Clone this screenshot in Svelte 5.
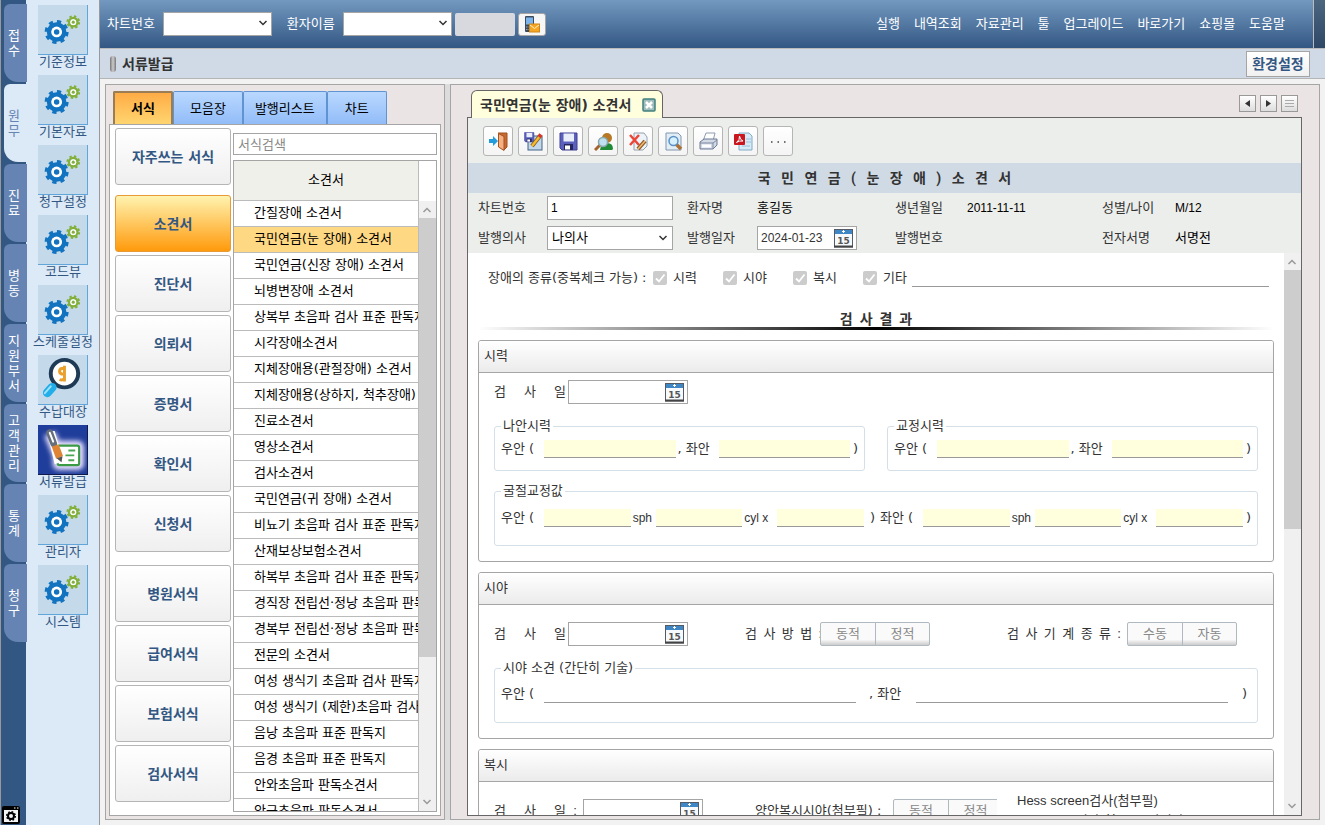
<script lang="ts">
	const modules = ['접수', '원무', '진료', '병동', '지원부서', '고객관리', '통계', '청구'];
	const shortcuts = [
		{ label: '기준정보', icon: 'gear' },
		{ label: '기본자료', icon: 'gear' },
		{ label: '청구설정', icon: 'gear' },
		{ label: '코드뷰', icon: 'gear' },
		{ label: '스케줄설정', icon: 'gear' },
		{ label: '수납대장', icon: 'money' },
		{ label: '서류발급', icon: 'paper' },
		{ label: '관리자', icon: 'gear' },
		{ label: '시스템', icon: 'gear' }
	];
	const menus = ['실행', '내역조회', '자료관리', '툴', '업그레이드', '바로가기', '쇼핑몰', '도움말'];
	const listTabs = ['서식', '모음장', '발행리스트', '차트'];
	const categoryGroups = [
		['자주쓰는 서식'],
		['소견서', '진단서', '의뢰서', '증명서', '확인서', '신청서'],
		['병원서식', '급여서식', '보험서식', '검사서식']
	];
	const forms = [
		'간질장애 소견서',
		'국민연금(눈 장애) 소견서',
		'국민연금(신장 장애) 소견서',
		'뇌병변장애 소견서',
		'상복부 초음파 검사 표준 판독지',
		'시각장애소견서',
		'지체장애용(관절장애) 소견서',
		'지체장애용(상하지, 척추장애) 소견서',
		'진료소견서',
		'영상소견서',
		'검사소견서',
		'국민연금(귀 장애) 소견서',
		'비뇨기 초음파 검사 표준 판독지',
		'산재보상보험소견서',
		'하복부 초음파 검사 표준 판독지',
		'경직장 전립선·정낭 초음파 판독지',
		'경복부 전립선·정낭 초음파 판독지',
		'전문의 소견서',
		'여성 생식기 초음파 검사 판독지',
		'여성 생식기 (제한)초음파 검사 판독지',
		'음낭 초음파 표준 판독지',
		'음경 초음파 표준 판독지',
		'안와초음파 판독소견서',
		'안구초음파 판독소견서'
	];
	const tools = [
		{ id: 'exit', label: '닫기' },
		{ id: 'edit', label: '수정 저장' },
		{ id: 'save', label: '저장' },
		{ id: 'user', label: '환자 조회' },
		{ id: 'delete', label: '삭제' },
		{ id: 'preview', label: '미리보기' },
		{ id: 'print', label: '인쇄' },
		{ id: 'pdf', label: 'PDF' }
	];

	let activeModule = $state('원무');
	let activeShortcut = $state('서류발급');
	let activeTab = $state('서식');
	let activeCategory = $state('소견서');
	let activeForm = $state('국민연금(눈 장애) 소견서');
</script>

{#snippet gearIcon()}
	<svg viewBox="0 0 50 50" class="fill">
		<g stroke="#1273c0" fill="none">
			<circle cx="19" cy="27.500" r="7.500" stroke-width="5" />
			<circle cx="19" cy="27.500" r="10.500" stroke-width="3.500" stroke-dasharray="4.200 4.050" />
		</g>
		<circle cx="19" cy="27.500" r="5.500" fill="#fff" />
		<circle cx="19" cy="27.500" r="2.800" fill="#1273c0" />
		<g stroke="#83b03a" fill="none">
			<circle cx="36" cy="17.500" r="4.300" stroke-width="2.500" />
			<circle cx="36" cy="17.500" r="6" stroke-width="2" stroke-dasharray="2.400 2.310" />
		</g>
		<circle cx="36" cy="17.500" r="3" fill="#fff" />
		<circle cx="36" cy="17.500" r="1.600" fill="#83b03a" />
	</svg>
{/snippet}

{#snippet moneyIcon()}
	<svg viewBox="0 0 50 50" class="fill">
		<circle cx="27" cy="19" r="14" fill="#fff" stroke="#1f3a55" stroke-width="4" />
		<path d="M14.500 33 L9.500 38.500" stroke="#22aee8" stroke-width="9" stroke-linecap="round" />
		<path d="M13 32 L7 39" stroke="#9ee2ff" stroke-width="2" stroke-linecap="round" />
		<path d="M27 11 v16 M26 13.500 q-4 0 -4 3 q0 3 4 3 M22 25 q3 1.500 5 -1" fill="none" stroke="#eaa02c" stroke-width="3" />
	</svg>
{/snippet}

{#snippet paperIcon()}
	<svg viewBox="0 0 50 50" class="fill">
		<defs>
			<filter id="glow" x="-30%" y="-30%" width="160%" height="160%">
				<feGaussianBlur stdDeviation="2.500" />
			</filter>
		</defs>
		<g filter="url(#glow)" fill="none" stroke="#e8e0ff" stroke-width="12" stroke-linejoin="round">
			<path d="M12 9 L23 36 M21 22 H41 V40 H21 Z" />
		</g>
		<rect x="20" y="21" width="22" height="20" rx="2" fill="#fff" stroke="#3b9a45" stroke-width="2.200" />
		<path d="M31 26 h7 M28 31 h9 M31 36 h6" stroke="#4ca553" stroke-width="2" />
		<path d="M9 6 L17 40 L26 37 L17 6 Z" fill="#fff" />
		<path d="M12 8 L16 19" stroke="#66707c" stroke-width="7" stroke-linecap="round" />
		<path d="M12 8 L15.500 17" stroke="#fff" stroke-width="2" stroke-linecap="round" />
		<path d="M17.500 21 L22 33" stroke="#de8434" stroke-width="7.500" />
		<path d="M19 34 L25 32 L24 38 Z" fill="#555" />
	</svg>
{/snippet}

{#snippet chevron(cls: string)}
	<svg class={cls} viewBox="0 0 10 10"><path d="M1.500 3 L5 6.500 L8.500 3" fill="none" stroke="currentColor" stroke-width="1.500" /></svg>
{/snippet}

{#snippet dateBox(label: string, value: string)}
	<span class="date-box">
		<input type="text" aria-label={label} {value} />
		<button type="button" class="calendar" aria-label="{label} 달력">
			<svg viewBox="0 0 19 19" class="fill">
				<rect x=".5" y=".5" width="18" height="17.500" fill="#f7fafc" stroke="#555b66" />
				<rect x="1" y="1" width="17" height="4" fill="#3f86c4" />
				<path d="M8 2.500 h3 M9.500 1 v3" stroke="#fff" />
				<path d="M0 17.500 h19" stroke="#444" stroke-width="2" />
				<text x="9.500" y="15" text-anchor="middle" font-family="DejaVu Sans" font-weight="bold" font-size="9" fill="#555">15</text>
			</svg>
		</button>
	</span>
{/snippet}

{#snippet floppy()}
	<path d="M1 1 h17 v17 h-15 l-2 -2 Z" fill="#5b60bd" stroke="#3c4096" />
	<rect x="4.500" y="1.500" width="10.500" height="8" fill="#e8eefa" />
	<rect x="5" y="12" width="9" height="6" fill="#24265c" />
	<rect x="6" y="13.500" width="5" height="4" fill="#fff" />
{/snippet}

{#snippet toolIcon(id: string)}
	<svg viewBox="0 0 19 19" class="tool-icon">
		{#if id === 'exit'}
			<path d="M9 1 H18 V15 L15 18" fill="#c76a32" stroke="#a2501d" />
			<path d="M9.500 1.500 L15 4.500 V18.500 L9.500 15 Z" fill="#f3b184" stroke="#a65120" />
			<path d="M0 7 h4 V4 l5 5 l-5 5 v-3 H0 Z" fill="#239cdd" />
		{:else if id === 'edit'}
			<rect x="4" y="4" width="14" height="14" fill="#c5d8ea" stroke="#426489" />
			<g transform="scale(.55)">{@render floppy()}</g>
			<path d="M8 14 L16 4" stroke="#7a5523" stroke-width="4" />
			<path d="M8 14 L16 4" stroke="#f7bb2e" stroke-width="2.500" />
			<path d="M15 5 L17 2.500" stroke="#d83426" stroke-width="4" />
		{:else if id === 'save'}
			{@render floppy()}
		{:else if id === 'user'}
			<circle cx="13" cy="6" r="5" fill="#b77925" />
			<path d="M6 18 q1 -7 7 -7 q6 0 6 6 l-1 1 Z" fill="#1f8b35" />
			<path d="M6 13 L1 18" stroke="#a4632d" stroke-width="3" />
			<circle cx="9" cy="10" r="4.500" fill="#bfe1ef" stroke="#87a7ae" stroke-width="1.500" />
		{:else if id === 'delete'}
			<path d="M5 1 h10 l3 4 v9 l-4 4 h-9 Z" fill="#edf3f8" stroke="#92a2ae" />
			<path d="M1 3 L10 13 M10 3 L1 13" stroke="#ec4638" stroke-width="2.500" />
			<path d="M9 17 L16 9" stroke="#955728" stroke-width="4" />
			<path d="M9 17 L16 9" stroke="#eac26e" stroke-width="1.500" />
		{:else if id === 'preview'}
			<path d="M2 1 h12 l3 3 v14 H2 Z" fill="#e2edf5" stroke="#8197b0" />
			<path d="M12 12 L17 17" stroke="#ac7136" stroke-width="3.500" />
			<circle cx="9.500" cy="9" r="4.500" fill="#d5f0ff" stroke="#5b91c4" stroke-width="1.500" />
		{:else if id === 'print'}
			<path d="M7 1 L16 1 L14 9 L4 9 Z" fill="#fff" stroke="#8e9bb0" />
			<path d="M1 10 L5 7 H18 V13 L14 17 H1 Z" fill="#d3dae6" stroke="#6b7894" />
			<path d="M3 14 H12" stroke="#fff" stroke-width="3" />
			<path d="M1 11 H14 L18 8 M14 11 V17" fill="none" stroke="#7c89a2" />
		{:else}
			<path d="M5 1 h10 l3 3 v14 H5 Z" fill="#d7ebf7" stroke="#82abc5" />
			<path d="M8 14 h8 M12 7 h5 M12 10 h5" stroke="#9cc0d8" />
			<rect x="0" y="2" width="11" height="11" rx="1" fill="#ca161f" />
			<path d="M2.500 10.500 Q6 8 5.500 4 Q6 8 9 9 Q5 8.500 2.500 10.500" fill="none" stroke="#fff" />
		{/if}
	</svg>
{/snippet}

{#snippet seg(name: string, options: string[])}
	<span class="segment" role="group" aria-label={name}>
		{#each options as option}
			<button type="button">{option}</button>
		{/each}
	</span>
{/snippet}

<div class="app">
	<nav class="rail" aria-label="업무">
		{#each modules as name}
			<button type="button" class="rail-tab" class:active={activeModule === name} onclick={() => (activeModule = name)}>
				<span>{name}</span>
			</button>
		{/each}
		<button type="button" class="rail-settings" aria-label="화면 설정">
			<svg viewBox="0 0 18 18" class="fill">
				<rect width="18" height="18" rx="2" fill="#000" />
				<rect x="2" y="4" width="14" height="12" fill="#f4f4f4" />
				<circle cx="9" cy="10" r="3" fill="none" stroke="#000" stroke-width="2" />
				<circle cx="9" cy="10" r="4.300" fill="none" stroke="#000" stroke-width="1.500" stroke-dasharray="1.700 1.670" />
				<path d="M12 2 h1.500 M15 2 h1.500" stroke="#fff" />
			</svg>
		</button>
	</nav>

	<nav class="shortcuts" aria-label="바로가기">
		{#each shortcuts as item}
			<button type="button" class="shortcut" class:active={activeShortcut === item.label} onclick={() => (activeShortcut = item.label)}>
				<span class="shortcut-icon">
					{#if item.icon === 'gear'}
						{@render gearIcon()}
					{:else if item.icon === 'money'}
						{@render moneyIcon()}
					{:else}
						{@render paperIcon()}
					{/if}
				</span>
				<span class="shortcut-label">{item.label}</span>
			</button>
		{/each}
	</nav>

	<div class="main">
		<header class="topbar">
			<label for="chart-search">차트번호</label>
			<span class="select-box top-select">
				<select id="chart-search"><option></option></select>
				{@render chevron('chevron')}
			</span>
			<label for="name-search" class="name-label">환자이름</label>
			<span class="select-box top-select">
				<select id="name-search"><option></option></select>
				{@render chevron('chevron')}
			</span>
			<span class="blank-chip"></span>
			<button type="button" class="sms" aria-label="문자 발송">
				<svg viewBox="0 0 16 17" class="sms-icon">
					<rect x="1" y="0" width="9" height="16" rx="1" fill="#3c4a5c" />
					<rect x="2" y="1.500" width="7" height="7" fill="#7db4ec" />
					<path d="M2 11 h7 M2 13.500 h7" stroke="#98a8ba" stroke-dasharray="1.500 1" />
					<rect x="5.500" y="8" width="10" height="8" fill="#f5a623" stroke="#cf8618" />
					<path d="M6 9 L10.500 12.500 L15 9" fill="none" stroke="#fff0c8" />
				</svg>
			</button>
			<nav class="menu" aria-label="메뉴">
				{#each menus as menu}
					<a href="#menu">{menu}</a>
				{/each}
			</nav>
			<span class="topbar-end"></span>
		</header>

		<div class="titlebar">
			<span class="pill"></span>
			<h1>서류발급</h1>
			<button type="button">환경설정</button>
		</div>

		<div class="panels">
			<section class="list-panel">
				<div class="list-tabs" role="tablist">
					{#each listTabs as tab}
						<button type="button" role="tab" aria-selected={activeTab === tab} class:active={activeTab === tab} onclick={() => (activeTab = tab)}>{tab}</button>
					{/each}
				</div>
				<div class="list-body">
					<div class="categories">
						{#each categoryGroups as group}
							<div class="category-group">
								{#each group as category}
									<button type="button" class:active={activeCategory === category} onclick={() => (activeCategory = category)}>{category}</button>
								{/each}
							</div>
						{/each}
					</div>
					<div class="form-list">
						<input type="search" placeholder="서식검색" aria-label="서식검색" />
						<div class="grid">
							<div class="grid-rows">
								<table>
									<thead>
										<tr><th>소견서</th></tr>
									</thead>
									<tbody>
										{#each forms as form}
											<tr class:selected={activeForm === form} onclick={() => (activeForm = form)}><td>{form}</td></tr>
										{/each}
									</tbody>
								</table>
							</div>
							<div class="scroll grid-scroll">
								{@render chevron('arrow up')}
								<span class="thumb grid-thumb"></span>
								{@render chevron('arrow')}
							</div>
						</div>
					</div>
				</div>
			</section>

			<div class="splitter"></div>

			<section class="doc-panel">
				<div class="doc-tabs">
					<div class="doc-tab">
						<span>국민연금(눈 장애) 소견서</span>
						<button type="button" aria-label="탭 닫기">
							<svg viewBox="0 0 14 14" class="fill"><rect x="1" y="1" width="12" height="12" rx="1" fill="#9fbdbc" stroke="#41807e" stroke-width="1.500" /><path d="M4 4 l6 6 M10 4 l-6 6" stroke="#fff" stroke-width="2.500" /></svg>
						</button>
					</div>
					<div class="tab-nav">
						<button type="button" aria-label="이전"><svg viewBox="0 0 13 13"><path d="M9 3 v7 L4 6.500 Z" fill="#333" /></svg></button>
						<button type="button" aria-label="다음"><svg viewBox="0 0 13 13"><path d="M4 3 v7 L9 6.500 Z" fill="#333" /></svg></button>
						<button type="button" aria-label="목록"><svg viewBox="0 0 13 13"><path d="M2 3.500 h9 M2 6.500 h9 M2 9.500 h9" stroke="#aaa" /></svg></button>
					</div>
				</div>

				<div class="doc">
					<div class="toolbar">
						{#each tools as tool}
							<button type="button" aria-label={tool.label}>{@render toolIcon(tool.id)}</button>
						{/each}
						<button type="button" aria-label="더보기">
							<svg viewBox="0 0 19 19" class="tool-icon"><path d="M2 10 h1.500 M8.500 10 h1.500 M15 10 h1.500" stroke="#444" stroke-width="1.500" /></svg>
						</button>
					</div>

					<h2 class="spaced">국   민   연   금   (   눈   장   애   )   소   견   서</h2>

					<div class="info">
						<label for="chart-no">차트번호</label>
						<input id="chart-no" class="latin" type="text" value="1" />
						<span>환자명</span>
						<span class="value">홍길동</span>
						<span>생년월일</span>
						<span class="value latin">2011-11-11</span>
						<span>성별/나이</span>
						<span class="value latin">M/12</span>

						<label for="doctor">발행의사</label>
						<span class="select-box doctor">
							<select id="doctor"><option>나의사</option></select>
							{@render chevron('chevron')}
						</span>
						<span>발행일자</span>
						<span class="issue-date">{@render dateBox('발행일자', '2024-01-23')}</span>
						<span>발행번호</span>
						<span class="value"></span>
						<span>전자서명</span>
						<span class="value">서명전</span>
					</div>

					<div class="doc-body">
						<div class="sheet">
							<div class="kinds">
								<span class="kinds-label">장애의 종류(중복체크 가능) :</span>
								{#each ['시력', '시야', '복시', '기타'] as kind}
									<label>
										<input type="checkbox" checked disabled />
										<svg viewBox="0 0 14 14" class="tick"><path d="M3 7.500 L6 10.500 L11.500 3.500" fill="none" stroke="#fff" stroke-width="1.800" /></svg>
										<span>{kind}</span>
									</label>
								{/each}
								<input type="text" class="line etc" aria-label="기타 내용" />
							</div>

							<h3 class="spaced">검  사  결  과</h3>

							<section class="card">
								<h4>시력</h4>
								<div class="card-body">
									<div class="row">
										<span class="exam-label">검     사     일</span>
										{@render dateBox('시력 검사일', '')}
									</div>
									<div class="pair">
										{#each ['나안시력', '교정시력'] as title}
											<fieldset>
												<legend>{title}</legend>
												<div class="field-row">
													<span class="lead">우안 (</span>
													<input type="text" class="line yellow" aria-label="{title} 우안" />
													<span class="mid">, 좌안</span>
													<input type="text" class="line yellow" aria-label="{title} 좌안" />
													<span class="close">)</span>
												</div>
											</fieldset>
										{/each}
									</div>
									<fieldset class="refraction">
										<legend>굴절교정값</legend>
										<div class="field-row">
											{#each ['우안', '좌안'] as eye}
												<span class="lead">{eye} (</span>
												<input type="text" class="line yellow" aria-label="{eye} 구면" />
												<span class="latin sph">sph</span>
												<input type="text" class="line yellow" aria-label="{eye} 원주" />
												<span class="latin cyl">cyl x</span>
												<input type="text" class="line yellow" aria-label="{eye} 축" />
												<span class="end">)</span>
											{/each}
										</div>
									</fieldset>
								</div>
							</section>

							<section class="card">
								<h4>시야</h4>
								<div class="card-body roomy">
									<div class="row">
										<span class="exam-label">검     사     일</span>
										{@render dateBox('시야 검사일', '')}
										<span class="spaced method">검  사  방  법  :</span>
										{@render seg('검사방법', ['동적', '정적'])}
										<span class="spaced machine">검  사  기  계  종  류  :</span>
										{@render seg('검사기계종류', ['수동', '자동'])}
									</div>
									<fieldset class="opinion">
										<legend>시야 소견 (간단히 기술)</legend>
										<div class="field-row">
											<span class="lead">우안 (</span>
											<input type="text" class="line" aria-label="시야 우안" />
											<span class="wide-mid">, 좌안</span>
											<input type="text" class="line" aria-label="시야 좌안" />
											<span class="wide-close">)</span>
										</div>
									</fieldset>
								</div>
							</section>

							<section class="card">
								<h4>복시</h4>
								<div class="card-body roomy">
									<div class="row">
										<span class="exam-label colon">검     사     일  :</span>
										{@render dateBox('복시 검사일', '')}
										<span class="binocular">양안복시시야(첨부필) :</span>
										<span class="cut">{@render seg('양안복시시야', ['동적', '정적'])}</span>
										<span class="hess">Hess screen검사(첨부필)<br /><span class="hess-sub">diplopia검사(첨부) 시야검사</span></span>
									</div>
								</div>
							</section>
						</div>
						<div class="scroll">
							{@render chevron('arrow up')}
							<span class="thumb doc-thumb"></span>
							{@render chevron('arrow')}
						</div>
					</div>
				</div>
			</section>
		</div>
	</div>
</div>

<style>
	:global(body) {
		background: #f2f2f2;
	}

	.app {
		display: flex;
		height: 100vh;
		overflow: hidden;
		font-family: 'DejaVu Sans', 'Noto Sans CJK KR', sans-serif;
		font-size: 13px;
		line-height: 18px;
		color: #333;
	}

	.app * {
		box-sizing: border-box;
	}

	button,
	input,
	select {
		font: inherit;
		color: inherit;
		margin: 0;
		padding: 0;
		border: 1px solid #a5a5a5;
		border-radius: 0;
		outline: none;
	}

	button {
		white-space: nowrap;
		cursor: pointer;
	}

	h1,
	h2,
	h3,
	h4 {
		margin: 0;
		font-size: 14px;
	}

	.fill {
		display: block;
		width: 100%;
		height: 100%;
	}

	.spaced {
		font-family: Roboto, 'Noto Sans CJK KR', sans-serif;
		white-space: pre;
	}

	/* 왼쪽 업무 탭 */
	.rail {
		flex: none;
		display: flex;
		flex-direction: column;
		gap: 2px;
		width: 27px;
		padding: 4px 0 1px 2px;
		background: linear-gradient(90deg, #999 1px, #335783 1px, #335783 26px, #dce9f6 26px);
	}

	.rail-tab {
		display: flex;
		align-items: center;
		justify-content: center;
		width: 23px;
		height: 78px;
		margin-left: 2px;
		padding-right: 3px;
		border: 0;
		border-radius: 6px 0 0 14px;
		background: #6584b3;
		color: #fff;
		line-height: 15px;
		white-space: normal;
	}

	.rail-tab span {
		width: 13px;
		word-break: break-all;
	}

	.rail-tab.active {
		background: #dce9f6;
		color: #6584b3;
	}

	.rail-settings {
		width: 18px;
		height: 18px;
		margin-top: auto;
		border: 0;
		background: none;
	}

	.shortcuts {
		flex: none;
		display: flex;
		flex-direction: column;
		width: 73px;
		padding-top: 5px;
		background: #dce9f6;
		border-right: 1px solid #999;
	}

	.shortcut {
		display: flex;
		flex-direction: column;
		align-items: center;
		height: 70px;
		border: 0;
		background: none;
		color: #335783;
	}

	.shortcut-icon {
		width: 50px;
		height: 50px;
		background: #c4d9ea;
		border-right: 1px solid #62a5d8;
		border-bottom: 1px solid #62a5d8;
	}

	.shortcut.active .shortcut-icon {
		background: #1f3d9a;
		border-color: #111a4c;
	}

	.shortcut-label {
		line-height: 14px;
	}

	.main {
		flex: 1;
		display: flex;
		flex-direction: column;
		min-width: 0;
	}

	.topbar {
		flex: none;
		display: flex;
		align-items: center;
		height: 49px;
		padding-left: 7px;
		background: linear-gradient(#7399c0, #335783);
		border-bottom: 1px solid #bbb;
		color: #fff;
	}

	.select-box {
		position: relative;
		display: flex;
		height: 24px;
		color: #333;
	}

	.select-box select {
		width: 100%;
		padding-left: 4px;
		background: #fff;
		appearance: none;
		color: #000;
	}

	.chevron {
		position: absolute;
		top: 6px;
		right: 4px;
		width: 10px;
		height: 10px;
	}

	.top-select {
		width: 109px;
		margin-left: 8px;
	}

	.name-label {
		margin-left: 15px;
	}

	.blank-chip {
		width: 60px;
		height: 23px;
		margin: 0 3px;
		background: #d8d9de;
		border-radius: 2px;
	}

	.sms {
		display: flex;
		align-items: center;
		justify-content: center;
		width: 28px;
		height: 23px;
		border-radius: 3px;
		background: #f6f6f6;
	}

	.sms-icon {
		width: 16px;
		height: 17px;
	}

	.menu {
		display: flex;
		gap: 14px;
		margin-left: auto;
		padding-right: 28px;
	}

	.menu a {
		color: #fff;
		text-decoration: none;
		white-space: nowrap;
	}

	.topbar-end {
		width: 12px;
		height: 100%;
		background: linear-gradient(#4c6680, #2d4766);
		border-left: 1px solid #bbb;
	}

	.titlebar {
		flex: none;
		display: flex;
		align-items: center;
		height: 30px;
		padding: 0 15px 0 10px;
		background: #d0dae6;
		border-bottom: 1px solid #b5b5b5;
	}

	.pill {
		width: 6px;
		height: 16px;
		margin-right: 6px;
		border-radius: 3px;
		background: linear-gradient(90deg, #777, #ccc, #777);
	}

	.titlebar h1 {
		line-height: 16px;
	}

	.titlebar button {
		width: 64px;
		height: 26px;
		margin-left: auto;
		background: linear-gradient(#fff, #f0f0f0);
		color: #335783;
		font-size: 14px;
		font-weight: bold;
	}

	.panels {
		flex: 1;
		display: flex;
		min-height: 0;
		padding: 5px;
	}

	.list-panel {
		display: flex;
		flex-direction: column;
		width: 340px;
		padding: 6px 3px 3px;
		background: #eae5e4;
		border: 1px solid #a5a5a5;
	}

	.splitter {
		width: 5px;
		background: #dcdcdc;
	}

	.list-tabs {
		display: flex;
		padding-left: 4px;
		height: 33px;
	}

	.list-tabs button {
		min-width: 60px;
		padding: 2px 11px 0;
		border-color: #5f93d2;
		border-bottom: 0;
		border-radius: 2px 2px 0 0;
		background: linear-gradient(#b9d8ff, #92bcf8);
		color: #000;
	}

	.list-tabs button:nth-child(2) {
		padding: 2px 16px 0;
	}

	.list-tabs .active {
		padding: 0 16px;
		border: 2px solid #9a7d55;
		border-bottom: 0;
		background: linear-gradient(#ffac45, #ffd570);
		font-weight: bold;
	}

	.list-body {
		flex: 1;
		display: flex;
		gap: 2px;
		min-height: 0;
		padding: 3px 3px 3px 5px;
		background: #fff;
		border: 1px solid #a5a5a5;
	}

	.categories {
		display: flex;
		flex-direction: column;
		gap: 10px;
		width: 116px;
		flex: none;
	}

	.category-group {
		display: flex;
		flex-direction: column;
		gap: 3px;
	}

	.category-group:last-child {
		margin-top: 3px;
	}

	.category-group button {
		height: 57px;
		border-color: #b5b5b5;
		border-radius: 3px;
		background: linear-gradient(#fff, #efefef);
		color: #335783;
		font-size: 14px;
		font-weight: bold;
	}

	.category-group .active {
		border-color: #e69b37;
		background: linear-gradient(#fff3b0, #ff9a0c);
	}

	.form-list {
		flex: 1;
		display: flex;
		flex-direction: column;
		gap: 5px;
		min-width: 0;
		padding-top: 5px;
	}

	.form-list input {
		flex: none;
		width: 100%;
		height: 22px;
		padding-left: 4px;
		background: #fff;
	}

	.form-list input::placeholder {
		color: #888;
	}

	.grid {
		flex: 1;
		display: flex;
		min-height: 0;
		border: 1px solid #a5a5a5;
	}

	.grid-rows {
		flex: 1;
		min-width: 0;
		overflow: hidden;
		border-right: 1px solid #bbb;
	}

	table {
		width: 100%;
		table-layout: fixed;
		border-collapse: collapse;
	}

	th {
		height: 39px;
		padding: 0;
		background: #f0f0ea;
		border-bottom: 1px solid #bbb;
		color: #000;
		font-weight: normal;
	}

	td {
		height: 26px;
		padding: 0 0 0 20px;
		border-bottom: 1px solid #bbb;
		color: #000;
		overflow: hidden;
		white-space: nowrap;
	}

	.selected td {
		background: #ffd884;
	}

	.scroll {
		flex: none;
		display: flex;
		flex-direction: column;
		width: 17px;
		background: #f0f0f0;
		color: #999;
	}

	.grid-scroll {
		margin-top: 40px;
	}

	.arrow {
		flex: none;
		width: 10px;
		height: 10px;
		margin: auto 3px 4px;
	}

	.arrow.up {
		margin: 4px 3px 3px;
		transform: rotate(180deg);
	}

	.thumb {
		background: #cdcdcd;
	}

	.grid-thumb {
		height: 72%;
	}

	.doc-thumb {
		height: 46%;
	}

	.doc-panel {
		flex: 1;
		display: flex;
		flex-direction: column;
		min-width: 0;
		padding: 5px 17px 3px 16px;
		background: #eae5e4;
		border: 1px solid #a5a5a5;
	}

	.doc-tabs {
		display: flex;
		justify-content: space-between;
		height: 27px;
		padding: 0 4px;
	}

	.doc-tab {
		position: relative;
		z-index: 1;
		display: flex;
		align-items: center;
		justify-content: space-between;
		gap: 6px;
		min-width: 192px;
		height: 28px;
		padding: 0 6px 0 8px;
		background: #ffffde;
		border: 1px solid #666;
		border-bottom: 0;
		border-radius: 6px 6px 0 0;
		font-size: 14px;
		font-weight: bold;
		white-space: nowrap;
	}

	.doc-tab button {
		width: 14px;
		height: 14px;
		border: 0;
		background: none;
	}

	.tab-nav {
		display: flex;
		gap: 4px;
		padding-top: 5px;
	}

	.tab-nav button {
		width: 17px;
		height: 17px;
		background: linear-gradient(#fff, #ddd);
		border-color: #999;
	}

	.tab-nav svg {
		display: block;
		width: 13px;
		height: 13px;
		margin: 1px;
	}

	.doc {
		flex: 1;
		display: flex;
		flex-direction: column;
		min-height: 0;
		background: #fff;
		border: 1px solid #666;
	}

	.toolbar {
		flex: none;
		display: flex;
		gap: 5px;
		padding: 8px 15px 7px;
		background: #eceeeb;
	}

	.toolbar button {
		display: flex;
		align-items: center;
		justify-content: center;
		width: 30px;
		height: 30px;
		border-color: #b5b5b5;
		border-radius: 3px;
		background: linear-gradient(#fff, #f4f4f4);
	}

	.tool-icon {
		width: 19px;
		height: 19px;
	}

	h2 {
		flex: none;
		height: 30px;
		background: #d0dae4;
		line-height: 30px;
		text-align: center;
	}

	.info {
		flex: none;
		display: grid;
		grid-template-columns: 69px 140fr 70px 138fr 72px 135fr 73px 126fr;
		grid-auto-rows: 30px;
		align-items: center;
		padding-left: 10px;
		background: #eceeeb;
		white-space: nowrap;
	}

	.info > input,
	.doctor {
		width: 90%;
		height: 24px;
	}

	.info > input {
		padding-left: 3px;
		background: #fff;
		color: #000;
	}

	.value {
		color: #000;
	}

	.latin {
		font-family: 'Liberation Sans', 'Noto Sans CJK KR', sans-serif;
		font-size: 12px;
	}

	.doctor .chevron {
		top: 7px;
		right: 5px;
	}

	.date-box {
		display: flex;
		align-items: center;
		width: 120px;
		height: 24px;
		background: #fff;
		border: 1px solid #a5a5a5;
	}

	.date-box input {
		flex: 1;
		min-width: 0;
		height: 22px;
		padding-left: 3px;
		border: 0;
		background: none;
		font-family: 'Liberation Sans', sans-serif;
		font-size: 12px;
	}

	.calendar {
		width: 19px;
		height: 19px;
		margin-right: 3px;
		border: 0;
		background: none;
	}

	.issue-date .date-box {
		width: 100px;
	}

	.doc-body {
		flex: 1;
		display: flex;
		min-height: 0;
	}

	.sheet {
		flex: 1;
		min-width: 0;
		padding: 0 10px;
		overflow: hidden;
	}

	.kinds {
		display: flex;
		align-items: center;
		gap: 30px;
		height: 36px;
		margin-top: 7px;
		padding: 0 5px 0 10px;
		white-space: nowrap;
	}

	.kinds-label {
		width: 165px;
		margin-right: -30px;
	}

	.kinds label {
		position: relative;
		display: flex;
		flex: none;
		align-items: center;
		gap: 6px;
		width: 40px;
	}

	.kinds label input {
		flex: none;
		width: 14px;
		height: 14px;
		border: 0;
		border-radius: 2px;
		background: #ccc;
		appearance: none;
	}

	.tick {
		position: absolute;
		left: 0;
		width: 14px;
		height: 14px;
	}

	.line {
		flex: 1;
		min-width: 0;
		height: 18px;
		border: 0;
		border-bottom: 1px solid #999;
		background: none;
	}

	.line.yellow {
		background: #ffffde;
	}

	.etc {
		margin-left: -21px;
	}

	h3 {
		height: 34px;
		padding-top: 14px;
		background: linear-gradient(90deg, transparent, #000 50%, transparent) bottom / 100% 3px no-repeat;
		text-align: center;
		line-height: 18px;
	}

	.card {
		margin-top: 10px;
		border: 1px solid #a5a5a5;
		border-radius: 3px;
	}

	h4 {
		height: 32px;
		padding-left: 5px;
		border-bottom: 1px solid #a5a5a5;
		border-radius: 2px 2px 0 0;
		background: linear-gradient(#fff, #ebebeb);
		font-size: 13px;
		font-weight: normal;
		line-height: 30px;
	}

	.card-body {
		padding: 7px 15px 15px;
	}

	.card-body.roomy {
		padding-top: 17px;
	}

	.row {
		display: flex;
		align-items: center;
		height: 24px;
		white-space: nowrap;
	}

	.exam-label {
		width: 74px;
		font-family: 'Liberation Sans', 'Noto Sans CJK KR', sans-serif;
		white-space: pre;
	}

	.exam-label.colon {
		width: 89px;
	}

	.method {
		width: 75px;
		margin-left: 57px;
	}

	.machine {
		width: 120px;
		margin-left: 77px;
	}

	.binocular {
		width: 138px;
		margin-left: 52px;
	}

	.cut {
		width: 104px;
		overflow: hidden;
	}

	.hess {
		margin-left: 20px;
		font-family: 'Liberation Sans', 'Noto Sans CJK KR', sans-serif;
		line-height: 20px;
	}

	.hess-sub {
		padding-left: 14px;
	}

	.segment {
		display: flex;
	}

	.segment button {
		flex: none;
		width: 55px;
		height: 24px;
		border-color: #b0b8c0;
		border-radius: 0 2px 2px 0;
		background: linear-gradient(#fafafa 75%, #ccc);
		color: #888;
	}

	.segment button:first-child {
		width: 56px;
		margin-right: -1px;
		border-radius: 2px 0 0 2px;
	}

	fieldset {
		min-width: 0;
		margin: 0;
		padding: 2px 6px 9px;
		border: 1px solid #d5dfe8;
		border-radius: 3px;
	}

	legend {
		padding: 0 2px;
		line-height: 18px;
	}

	.pair {
		display: grid;
		grid-template-columns: 1fr 1fr;
		gap: 22px;
		margin: 13px 0 11px;
	}

	.field-row {
		display: flex;
		align-items: center;
		height: 24px;
		white-space: nowrap;
	}

	.refraction {
		padding: 6px 6px 15px;
	}

	.opinion {
		margin-top: 13px;
		padding: 5px 6px 16px;
	}

	.lead {
		width: 43px;
	}

	.mid {
		width: 43px;
		padding-left: 2px;
	}

	.close {
		width: 8px;
		padding-left: 3px;
	}

	.sph {
		width: 25px;
		padding-left: 2px;
	}

	.cyl {
		width: 35px;
		padding-left: 2px;
	}

	.end {
		width: 16px;
		padding-left: 6px;
	}

	.end:last-child {
		width: 8px;
		padding-left: 3px;
	}

	.wide-mid {
		width: 60px;
		padding-left: 13px;
	}

	.wide-close {
		width: 23px;
		padding-left: 14px;
	}
</style>
